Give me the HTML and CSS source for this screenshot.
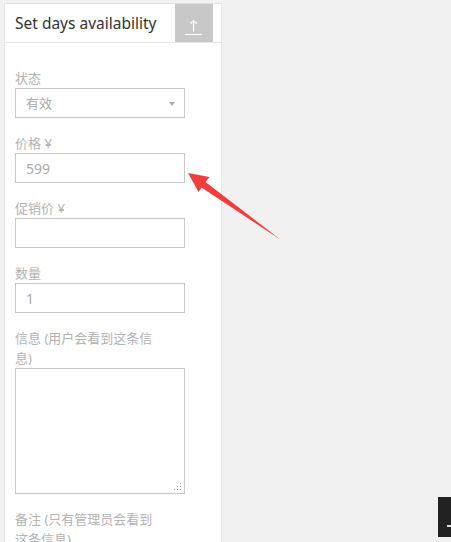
FILE: index.html
```html
<!DOCTYPE html>
<html lang="zh">
<head>
    <meta charset="UTF-8">
    <meta name="viewport" content="width=device-width, initial-scale=1.0">
    <title>Set days availability</title>
    <link rel="stylesheet" href="styles.css">
</head>
<body>
    <!-- 侧边面板 -->
    <div class="panel">
        <div class="panel-header">
            <span class="panel-title">Set days availability</span>
            <button class="upload-btn" title="upload">
                <svg width="38" height="38" viewBox="0 0 38 38">
                    <path d="M18.5 27.5 V16.5 M15.5 19.5 L18.5 16.5 L21.5 19.5" fill="none" stroke="#fff" stroke-width="1.2"/>
                    <path d="M10 30.5 H27" stroke="#fff" stroke-width="1"/>
                </svg>
            </button>
        </div>
        <div class="panel-body">
            <div class="field">
                <label>状态</label>
                <div class="select">有效<span class="caret"></span></div>
            </div>
            <div class="field">
                <label>价格 ¥</label>
                <input type="text" value="599">
            </div>
            <div class="field">
                <label>促销价 ¥</label>
                <input type="text" value="">
            </div>
            <div class="field">
                <label>数量</label>
                <input type="text" value="1">
            </div>
            <div class="field">
                <label>信息 (用户会看到这条信息)</label>
                <div class="textarea-wrap">
                    <textarea></textarea>
                    <span class="grip"></span>
                </div>
            </div>
            <div class="field">
                <label>备注 (只有管理员会看到这条信息)</label>
            </div>
        </div>
    </div>

    <!-- 标注箭头 -->
    <svg class="arrow" width="451" height="542" viewBox="0 0 451 542">
        <polygon points="188,173 209.5,177 205.5,182 281,240 201.5,187.5 198.5,192" fill="#f23d3d"/>
    </svg>

    <div class="dock"><span></span></div>
</body>
</html>
```

FILE: styles.css
```css
body {
    margin: 0;
    background: #f1f1f1;
    font-family: "Noto Sans", "Noto Sans CJK SC", sans-serif;
    height: 542px;
    overflow: hidden;
}

.panel {
    margin: 3px 0 0 4px;
    width: 216px;
    height: 538px;
    background: white;
    border: 1px solid #e5e5e5;
    border-bottom: none;
    overflow: hidden;
}

.panel-header {
    display: flex;
    align-items: center;
    justify-content: space-between;
    height: 38px;
    border-bottom: 1px solid #e5e5e5;
    padding-left: 10px;
    padding-right: 8px;
}

.panel-title {
    font-size: 15.5px;
    color: #333;
}

.upload-btn {
    width: 38px;
    height: 38px;
    padding: 0;
    border: none;
    background: #c8c8c8;
    display: block;
}

.upload-btn svg {
    display: block;
}

.panel-body {
    padding: 25px 10px 0 10px;
}

.field {
    margin-bottom: 15px;
}

.field label {
    display: block;
    max-width: 145px;
    font-size: 13px;
    line-height: 20px;
    color: #b3b3b3;
}

.field input,
.select {
    box-sizing: border-box;
    display: block;
    width: 170px;
    height: 30px;
    margin: 0;
    padding: 0 10px;
    border: 1px solid #c8c8c8;
    border-radius: 0;
    font-family: "Noto Sans", "Noto Sans CJK SC", sans-serif;
    font-size: 14px;
    color: #aaa;
    background: white;
    outline: none;
}

.select {
    position: relative;
    font-size: 13px;
    line-height: 28px;
}

.caret {
    position: absolute;
    right: 9px;
    top: 13px;
    border-left: 3px solid transparent;
    border-right: 3px solid transparent;
    border-top: 4px solid #aaa;
}

.textarea-wrap {
    position: relative;
    width: 170px;
}

.field textarea {
    box-sizing: border-box;
    display: block;
    width: 170px;
    height: 126px;
    margin: 0;
    border: 1px solid #c8c8c8;
    border-radius: 0;
    outline: none;
    resize: none;
}

/* 右下角拖动点 */
.grip {
    position: absolute;
    right: 4px;
    bottom: 4px;
    width: 1px;
    height: 1px;
    background: #999;
    box-shadow: -3px 0 #999, -6px 0 #999, 0 -3px #999, -3px -3px #999, 0 -6px #999;
}

.arrow {
    position: absolute;
    left: 0;
    top: 0;
    pointer-events: none;
}

.dock {
    position: absolute;
    left: 438px;
    top: 497px;
    width: 13px;
    height: 40px;
    background: #222;
}

.dock span {
    position: absolute;
    left: 9px;
    top: 28px;
    width: 4px;
    height: 2px;
    background: #ddd;
}
```
